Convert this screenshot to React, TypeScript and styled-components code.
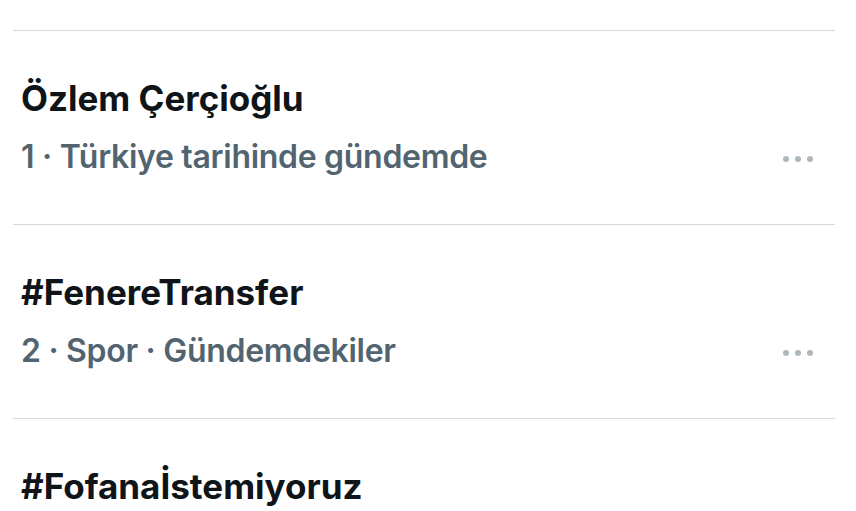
import React from "react";
import styled, { createGlobalStyle } from "styled-components";

const Global = createGlobalStyle`
  html, body { margin: 0; padding: 0; background: #ffffff; }
  body { font-family: Inter, "Noto Sans", sans-serif; }
`;

const Page = styled.div`
  width: 856px;
  height: 511px;
  overflow: hidden;
  box-sizing: border-box;
  padding: 30px 21px 0 13px;
  background: #ffffff;
`;

const List = styled.div`
  display: flex;
  flex-direction: column;
`;

const Trend = styled.div`
  border-top: 1px solid #d4d9dc;
  height: 194px;
  flex-shrink: 0;
  box-sizing: border-box;
  padding: 45px 22px 0 8px;
  display: flex;
  flex-direction: column;
`;

const Title = styled.div`
  font-size: 35px;
  line-height: 44px;
  font-weight: 700;
  color: #0f1419;
  letter-spacing: 0;
  white-space: nowrap;
`;

const MetaRow = styled.div`
  margin-top: 18px;
  display: flex;
  align-items: center;
  justify-content: space-between;
`;

const Meta = styled.div`
  font-size: 32px;
  line-height: 38px;
  font-weight: 600;
  color: #536471;
  letter-spacing: -0.3px;
  white-space: nowrap;
`;

const More = styled.div`
  display: flex;
  gap: 6px;
  align-items: center;
  margin-top: 3px;
`;

const Dot = styled.span`
  width: 6px;
  height: 6px;
  border-radius: 50%;
  background: #b0b7bc;
`;

type TrendItem = { title: string; meta?: string };

const trends: TrendItem[] = [
  { title: "Özlem Çerçioğlu", meta: "1 · Türkiye tarihinde gündemde" },
  { title: "#FenereTransfer", meta: "2 · Spor · Gündemdekiler" },
  { title: "#Fofanaİstemiyoruz" },
];

export default function App() {
  return (
    <>
      <Global />
      <Page>
        <List>
          {trends.map((t) => (
            <Trend key={t.title}>
              <Title>{t.title}</Title>
              {t.meta && (
                <MetaRow>
                  <Meta>{t.meta}</Meta>
                  <More>
                    <Dot />
                    <Dot />
                    <Dot />
                  </More>
                </MetaRow>
              )}
            </Trend>
          ))}
        </List>
      </Page>
    </>
  );
}
